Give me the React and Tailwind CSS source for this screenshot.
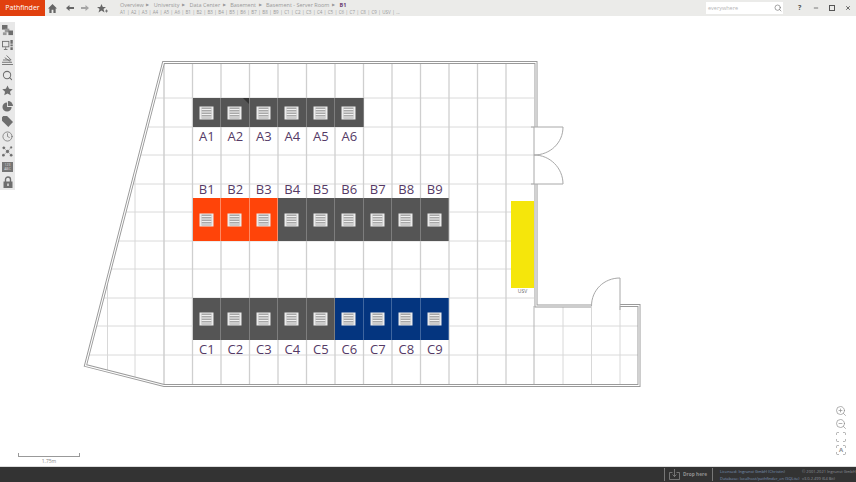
import React from 'react';
import { Search, Minus, X, Clock, ZoomIn, ZoomOut, Scan } from 'lucide-react';

const crumbs = ['Overview', 'University', 'Data Center', 'Basement', 'Basement - Server Room'];
const quick = ['A1','A2','A3','A4','A5','A6','B1','B2','B3','B4','B5','B6','B7','B8','B9','C1','C2','C3','C4','C5','C6','C7','C8','C9','USV','...'];

const rowA = [['A1'],['A2'],['A3'],['A4'],['A5'],['A6']];
const rowB = [['B1','red'],['B2','red'],['B3','red'],['B4'],['B5'],['B6'],['B7'],['B8'],['B9']];
const rowC = [['C1'],['C2'],['C3'],['C4'],['C5'],['C6','blue'],['C7','blue'],['C8','blue'],['C9','blue']];

const rackColors = {
  gray: 'bg-[#555555] border-[#7d7d7d]',
  red: 'bg-[#ff4409] border-[#ff8a63]',
  blue: 'bg-[#04357f] border-[#3f669f]',
};

const xLines = [192.5, 221, 249.5, 278, 306.5, 335, 363.5, 392, 420.5, 449, 477.5, 506];
const yLines = [[98,154],[127,146],[155,139],[184,132],[212,124],[241,117],[269,110],[298,102],[326,95],[355,88]];

function RackIcon() {
  return (
    <svg width="15" height="14" viewBox="0 0 15 14" className="shrink-0">
      <rect x="0.5" y="0.5" width="14" height="13" fill="#ececec" />
      <rect x="2.5" y="1.5" width="10" height="11" fill="#a8a8a8" />
      <path d="M2.500 3.500h10M2.500 6h10M2.500 8.500h10M2.500 11h10" stroke="#f0f0f0" strokeWidth="1" />
    </svg>
  );
}

function Rack({ color = 'gray', height, corner }) {
  return (
    <div className={`relative flex items-center justify-center border-r ${height} ${rackColors[color]}`}>
      <RackIcon />
      {corner && <div className="absolute top-0 right-0 w-0 h-0 border-t-[6px] border-l-[6px] border-t-[#333333] border-l-transparent" />}
    </div>
  );
}

function RackRow({ items, className, labelsOnTop, height }) {
  return (
    <div className={`absolute flex ${className}`}>
      {items.map(([name, color]) => (
        <div key={name} className={`w-[28.5px] flex ${labelsOnTop ? 'flex-col-reverse' : 'flex-col'}`}>
          <Rack color={color} height={height} corner={name === 'A2'} />
          <div className="h-[18px] text-center text-[13px] leading-[18px] text-[#553a66]">{name}</div>
        </div>
      ))}
    </div>
  );
}

function FloorPlan() {
  return (
    <svg className="absolute inset-0" width="856" height="450" viewBox="0 16 856 450" fill="none">
      {/* grid */}
      {yLines.map(([y, x]) => <path key={y} d={`M${x} ${y}H534`} stroke="#dadada" />)}
      <path d="M534 326H639M534 355H639" stroke="#dadada" />
      {xLines.map((x) => <path key={x} d={`M${x} 63V385`} stroke="#cfcfcf" strokeWidth="1.300" />)}
      <path d="M164 63V385" stroke="#cfcfcf" strokeWidth="1.500" />
      <path d="M135 171V378M107.500 280V371" stroke="#d8d8d8" />
      <path d="M534 306V384" stroke="#b5b5b5" />
      <path d="M563 306V384M591.500 306V384M620 306V384" stroke="#d8d8d8" />
      {/* walls */}
      <g strokeLinejoin="miter">
        <path d="M536 127V62.500H163.500L85.500 365.500L164 385.500H639V305.500H620M591 306H536V184" stroke="#9a9a9a" strokeWidth="3" />
        <path d="M536 127V62.500H163.500L85.500 365.500L164 385.500H639V305.500H620M591 306H536V184" stroke="#ffffff" strokeWidth="1.100" />
      </g>
      {/* doors */}
      <path d="M531 127H563C563 143 550 155 534 155C550 155 563 168 563 184H531M534 127V184" stroke="#a8a8a8" />
      <path d="M591.500 306C591.500 290 604 278 620 278V310" stroke="#a8a8a8" />
    </svg>
  );
}

function SideIcon({ children }) {
  return <div className="h-[15.2px] flex items-center justify-center text-[#6e6e6e]">{children}</div>;
}

function Sidebar() {
  return (
    <div className="absolute left-0 top-[6px] w-[15px] h-[168px] bg-[#e8e8e8] flex flex-col justify-center">
      <SideIcon>
        <svg width="11" height="11" viewBox="0 0 12 12" fill="#6e6e6e"><rect x="0" y="0" width="6" height="5" /><rect x="3" y="4" width="5" height="4" fill="#9a9a9a" /><rect x="7" y="6" width="5" height="5" /><rect x="1" y="8" width="4" height="3" fill="#9a9a9a" /></svg>
      </SideIcon>
      <SideIcon>
        <svg width="11" height="10" viewBox="0 0 12 11" fill="none" stroke="#6e6e6e"><rect x="0.500" y="1.500" width="7" height="6" /><path d="M4 8v2M2 10.500h4" /><path d="M10.500 0v4M10.500 5v2M10.500 8v3" strokeWidth="2.600" /></svg>
      </SideIcon>
      <SideIcon>
        <svg width="11" height="10" viewBox="0 0 12 11" fill="none" stroke="#777" strokeWidth="1.100"><path d="M0 10.500h12M0 8h11M1 5.500h9M3 3l6 4M5 .500l5 5" /></svg>
      </SideIcon>
      <SideIcon><Search size={11} strokeWidth={2.200} /></SideIcon>
      <SideIcon>
        <svg width="11" height="11" viewBox="0 0 24 24" fill="#6e6e6e"><path d="M12 1l3.400 7.400 8 .9-6 5.400 1.700 7.900L12 18.600l-7.100 4 1.700-7.900-6-5.400 8-.9z" /></svg>
      </SideIcon>
      <SideIcon>
        <svg width="11" height="11" viewBox="0 0 12 12" fill="#6e6e6e"><path d="M5.500 1.500v5h5a5 5 0 1 1-5-5z" /><path d="M6.500 0a5.500 5.500 0 0 1 5.500 5.500H6.500z" /></svg>
      </SideIcon>
      <SideIcon>
        <svg width="11" height="11" viewBox="0 0 13 13" fill="#6e6e6e"><path d="M0 1.500L1.500 0H6l7 7-5.500 6L0 5.500z" /></svg>
      </SideIcon>
      <SideIcon><Clock size={11} strokeWidth={1.600} /></SideIcon>
      <SideIcon>
        <svg width="11" height="11" viewBox="0 0 12 12" fill="#6e6e6e" stroke="#6e6e6e" strokeWidth="0.400"><path d="M2 2l4 4M10 1.500L6 6M1.500 10L6 6M10 10L6 6" /><circle cx="6" cy="6" r="1.600" /><circle cx="2" cy="2" r="1.300" /><circle cx="10" cy="1.500" r="1" /><circle cx="1.500" cy="10" r="1.300" /><circle cx="10" cy="10" r="1.300" /></svg>
      </SideIcon>
      <SideIcon>
        <div className="w-[11px] h-[10px] bg-[#757575] flex flex-col items-center justify-center text-[3.500px] leading-[4px] text-[#dddddd]">
          <span>123</span>
          <span>ABC</span>
        </div>
      </SideIcon>
      <SideIcon>
        <svg width="10" height="12" viewBox="0 0 10 12" fill="none"><path d="M2.500 6V3.500a2.500 2.500 0 0 1 5 0V6" stroke="#6e6e6e" strokeWidth="1.400" /><rect x="0.500" y="5.500" width="9" height="6.500" fill="#6e6e6e" /><rect x="4.300" y="7.500" width="1.400" height="2.500" fill="#e8e8e8" /></svg>
      </SideIcon>
    </div>
  );
}

function Header() {
  return (
    <header className="h-[16px] shrink-0 flex items-stretch bg-[#ebebe9] text-[#999999]">
      <div className="w-[45px] shrink-0 bg-[#e1400e] text-white text-[7px] flex items-center justify-center">Pathfinder</div>
      <div className="w-[75px] shrink-0 pl-[3px] flex items-center gap-[7.500px] text-[#666666]">
        <svg width="9" height="9" viewBox="0 0 10 10" fill="#666"><path d="M5 0L10 5H8.500V10H6V6.500H4V10H1.500V5H0z" /></svg>
        <svg className="ml-[1px]" width="8" height="6" viewBox="0 0 8 6" fill="#666"><path d="M0 3L3.500 0V2H8V4H3.500V6z" /></svg>
        <svg width="8" height="6" viewBox="0 0 8 6" fill="#a5a5a5"><path d="M8 3L4.500 0V2H0V4H4.500V6z" /></svg>
        <svg width="11" height="9" viewBox="0 0 11 9" fill="#666"><path d="M4.500 0l1.300 3H9L6.500 5l1 3.500-3-2-3 2 1-3.500L0 3h3.200z" /><path d="M9.500 5.500v3M8 7h3" stroke="#666" strokeWidth="0.800" /></svg>
      </div>
      <div className="min-w-0 flex flex-col pt-[1px]">
        <div className="flex items-center gap-[2.500px] text-[5.500px] leading-[8px] whitespace-nowrap">
          {crumbs.map((c) => (
            <React.Fragment key={c}>
              <span>{c}</span>
              <span className="text-[3.500px] mr-[2px]">▶</span>
            </React.Fragment>
          ))}
          <span className="font-bold text-[#6b3f72]">B1</span>
        </div>
        <div className="flex items-center gap-[1.500px] text-[4.500px] leading-[6px] whitespace-nowrap">
          {quick.map((q, i) => (
            <React.Fragment key={q}>
              <span>{q}</span>
              {i < quick.length - 1 && <span>|</span>}
            </React.Fragment>
          ))}
        </div>
      </div>
      <div className="ml-auto flex items-center">
        <div className="w-[77px] h-[12px] bg-white flex items-center justify-between pl-[2px] pr-[1px]">
          <span className="text-[5.500px] text-[#b5b5b5]">everywhere</span>
          <Search size={8} strokeWidth={2} className="text-[#777777]" />
        </div>
        <div className="w-[73px] flex items-center text-[#555555]">
          <span className="w-[30px] pl-[15px] text-[7px] font-bold">?</span>
          <span className="w-[16px] flex"><Minus size={6} strokeWidth={3} /></span>
          <span className="w-[16px] flex"><span className="w-[6px] h-[6px] border-[1.500px] border-[#555555]" /></span>
          <X size={6} strokeWidth={3.500} />
        </div>
      </div>
    </header>
  );
}

function Footer() {
  return (
    <footer className="h-[16px] shrink-0 flex items-center bg-[#333333] border-t border-[#dddddd] pl-[664px]">
      <div className="w-[49px] h-[13px] shrink-0 border-x-[1.500px] border-[#777777] flex items-center text-[#909090]">
        <svg className="ml-[4px]" width="11" height="11" viewBox="0 0 11 11" fill="none" stroke="#909090" strokeWidth="0.700"><path d="M3.500 3.500H.500V10.500H10.500V3.500H7.500M5.500 0V7.500M3.500 5.500L5.500 7.500L7.500 5.500" /></svg>
        <span className="ml-[3px] text-[4.800px] font-bold whitespace-nowrap">Drop here</span>
      </div>
      <div className="ml-[7px] w-[82px] shrink-0 flex flex-col gap-[2px] text-[4px] leading-[5px] text-[#7c95b8] whitespace-nowrap">
        <span>Licensed: Ingrunst GmbH (Christin)</span>
        <span>Database: localhost/pathfinder_en (SQLite)</span>
      </div>
      <div className="flex flex-col gap-[2px] text-[4px] leading-[5px] text-[#8d9299] whitespace-nowrap">
        <span>© 2001-2021 Ingrunst GmbH</span>
        <span>v3.0.2.499 (64 Bit)</span>
      </div>
    </footer>
  );
}

export default function App() {
  return (
    <div className="w-[856px] h-[482px] flex flex-col overflow-hidden bg-white" style={{ fontFamily: '"Open Sans", "Noto Sans", sans-serif' }}>
      <Header />
      <main className="relative flex-1">
        <FloorPlan />
        <Sidebar />

        <RackRow items={rowA} className="left-[192.500px] top-[82px]" height="h-[29px]" />
        <RackRow items={rowB} className="left-[192.500px] top-[164px]" height="h-[43px]" labelsOnTop />
        <RackRow items={rowC} className="left-[192.500px] top-[282px]" height="h-[42px]" />

        {/* USV */}
        <div className="absolute left-[511px] top-[185px] w-[23px] flex flex-col items-center">
          <div className="w-full h-[87px] bg-[#f5e60b]" />
          <span className="text-[5px] leading-[7px] text-[#666666]">USV</span>
        </div>

        {/* zoom tools */}
        <div className="absolute left-[835px] top-[389px] flex flex-col gap-[1px] text-[#8f8f8f]">
          <ZoomIn size={12} strokeWidth={1.400} />
          <ZoomOut size={12} strokeWidth={1.400} />
          <Scan size={12} strokeWidth={1.400} />
          <div className="relative">
            <Scan size={12} strokeWidth={1.400} />
            <span className="absolute inset-0 flex items-center justify-center text-[6px] font-bold">A</span>
          </div>
        </div>

        {/* scale */}
        <div className="absolute left-[18px] top-[437px] w-[62px] flex flex-col items-center">
          <div className="w-full h-[4px] border-x border-b border-[#999999]" />
          <span className="text-[5px] leading-[8px] text-[#888888]">1.75m</span>
        </div>
      </main>
      <Footer />
    </div>
  );
}
